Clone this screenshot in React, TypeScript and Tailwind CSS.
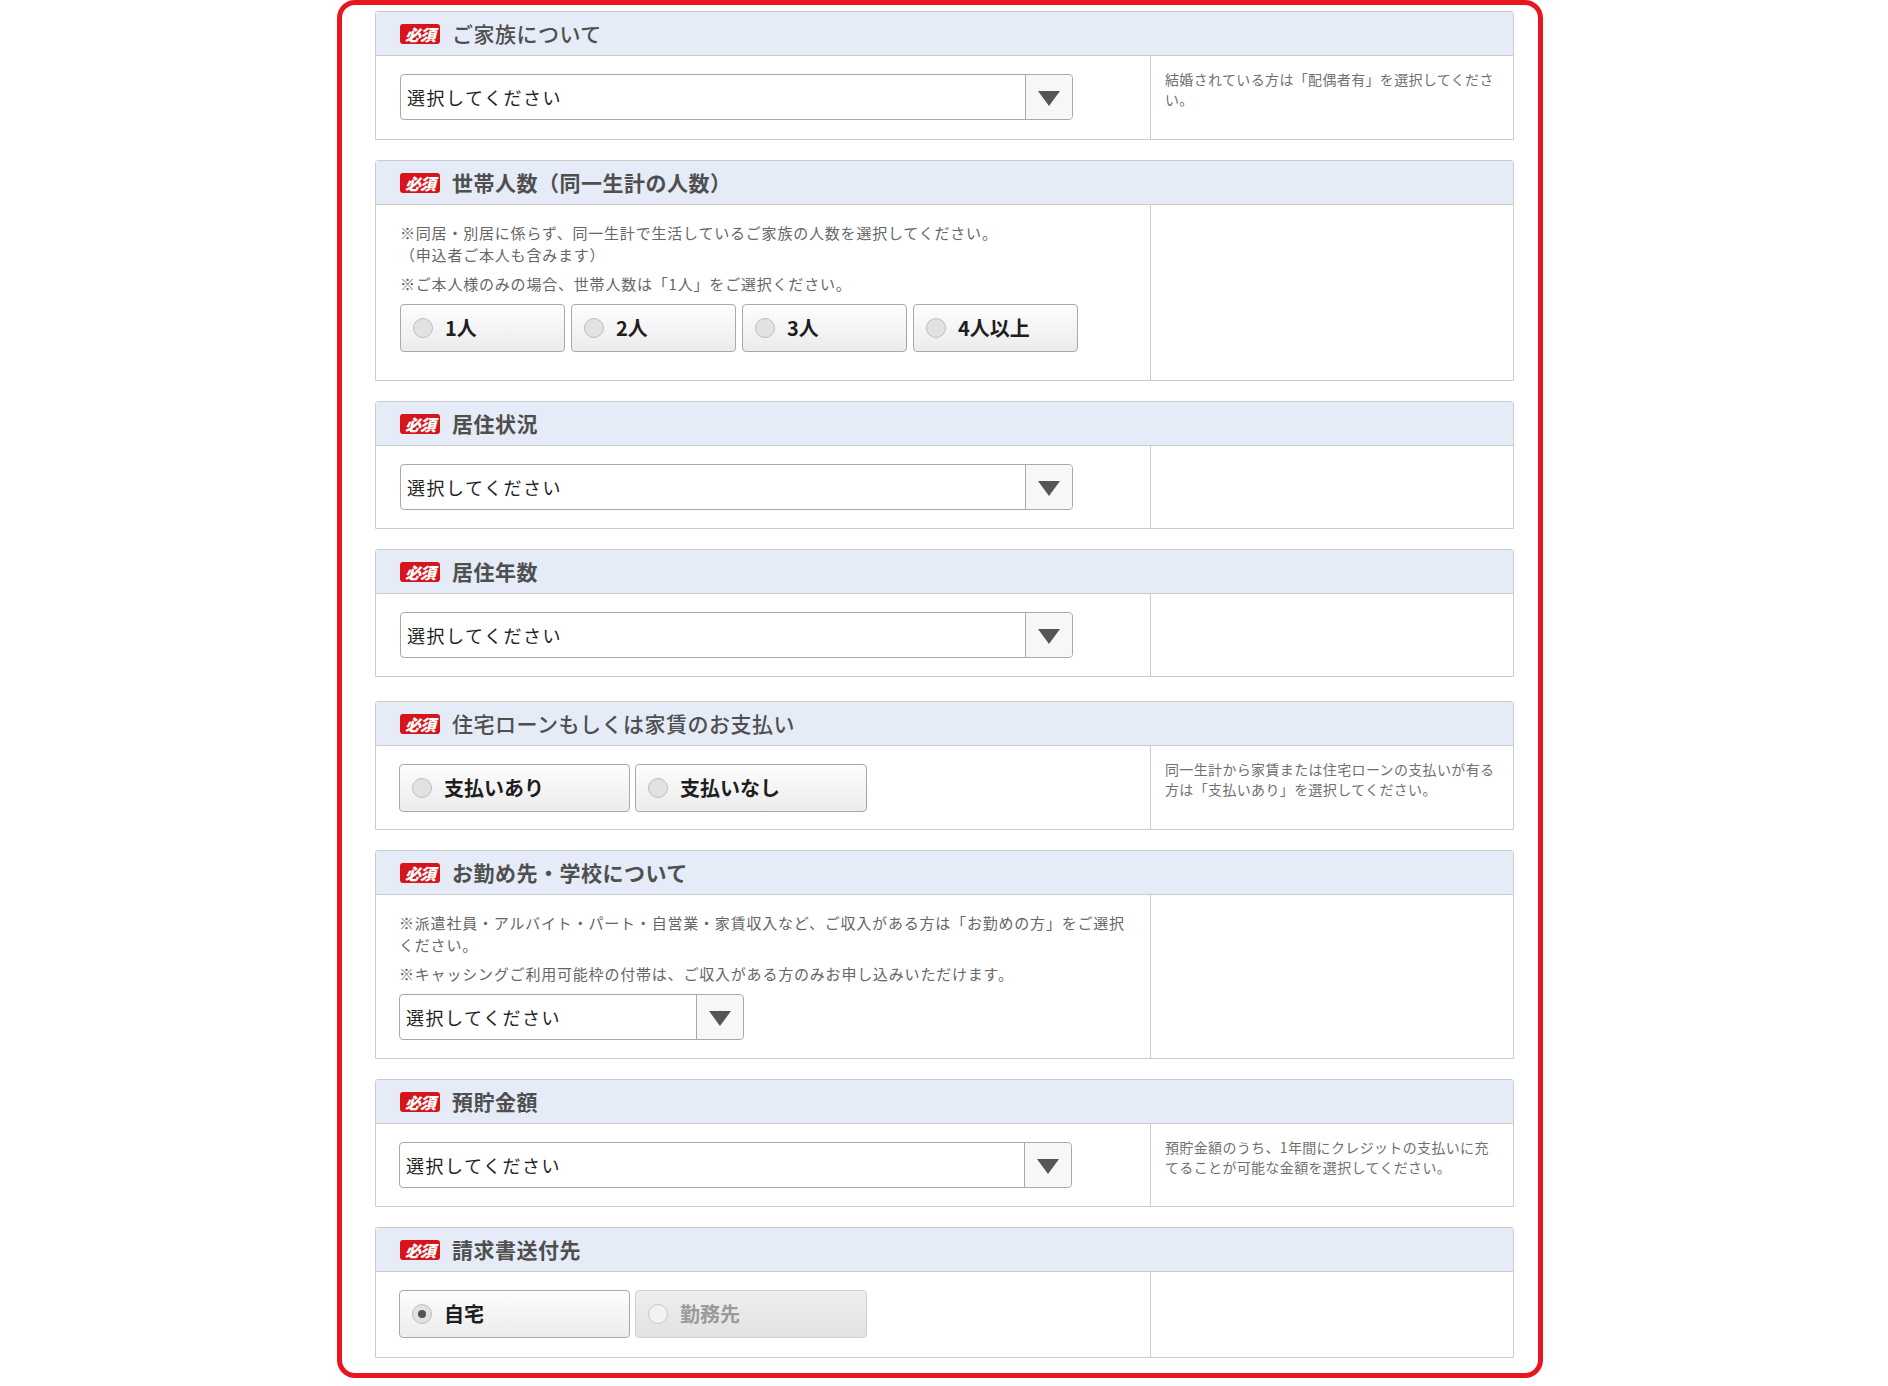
import React from 'react';

interface SectionProps {
  title: string;
  weight?: string;
  note?: React.ReactNode;
  bodyClass: string;
  className?: string;
  children: React.ReactNode;
}

const Badge = () => (
  <span className="inline-flex h-[20px] w-[40px] items-center justify-center rounded-[3px] bg-[#d8141b] text-[16px] font-black italic leading-none tracking-[-1px] text-white">
    必須
  </span>
);

const Section: React.FC<SectionProps> = ({ title, weight = 'font-bold', note, bodyClass, className = '', children }) => (
  <section className={`rounded-t-[3px] border border-[#cccccc] bg-white ${className}`}>
    <div className="flex h-[44px] items-center gap-[12px] border-b border-[#cccccc] bg-[#e5ecf7] pl-[24px]">
      <Badge />
      <h2 className={`text-[21px] leading-none tracking-[0.5px] text-[#4f4f4f] ${weight}`}>{title}</h2>
    </div>
    <div className="grid grid-cols-[774px_1fr]">
      <div className={bodyClass}>{children}</div>
      <div className="border-l border-[#cccccc] pl-[14px] pr-[12px] pt-[13px] text-[14px] leading-[20px] tracking-[0.35px] text-[#707070]">
        {note}
      </div>
    </div>
  </section>
);

const Select: React.FC<{ width: string }> = ({ width }) => (
  <div className={`flex h-[46px] rounded-[4px] border border-[#a9a9a9] bg-white ${width}`}>
    <div className="flex flex-1 items-center pl-[6px] text-[18px] tracking-[1.5px] text-[#222222]">選択してください</div>
    <div className="flex w-[47px] items-center justify-center rounded-r-[4px] border-l border-[#a9a9a9] bg-[#f7f7f7]">
      <svg width="22" height="15" viewBox="0 0 22 15" className="mt-[2px]">
        <polygon points="0,0 22,0 11,15" fill="#555555" />
      </svg>
    </div>
  </div>
);

const Radio: React.FC<{ label: string; width: string; checked?: boolean; disabled?: boolean }> = ({
  label,
  width,
  checked,
  disabled,
}) => (
  <div
    className={`flex h-[48px] items-center gap-[12px] rounded-[4px] border pl-[12px] ${width} ${
      disabled
        ? 'border-[#d0d0d0] bg-linear-to-b from-[#eeeeee] to-[#e2e2e2] text-[#9a9a9a]'
        : 'border-[#a9a9a9] bg-linear-to-b from-[#fdfdfd] to-[#ececec] text-[#1e1e1e]'
    }`}
  >
    <span
      className={`flex h-[20px] w-[20px] items-center justify-center rounded-full border ${
        disabled ? 'border-[#c8c8c8] bg-[#f2f2f2]' : 'border-[#bdbdbd] bg-[#e2e2e2]'
      }`}
    >
      {checked && <span className="h-[8px] w-[8px] rounded-full bg-[#555555]" />}
    </span>
    <span className="text-[20px] font-bold leading-none">{label}</span>
  </div>
);

const noteText = 'text-[15px] leading-[22px] tracking-[0.8px] text-[#666666]';

export default function App() {
  return (
    <div className="min-h-[1386px] bg-white font-['Noto_Sans_CJK_JP','Noto_Sans',sans-serif]">
      <div className="ml-[337px] w-[1206px] rounded-[18px] border-[5px] border-[#e8161f] pb-[15px] pl-[33px] pr-[24px] pt-[6px]">
        <div className="flex flex-col gap-[20px]">
          <Section
            title="ご家族について"
            weight="font-medium"
            bodyClass="pl-[24px] pt-[18px] pb-[19px]"
            note="結婚されている方は「配偶者有」を選択してください。"
          >
            <Select width="w-[673px]" />
          </Section>

          <Section title="世帯人数（同一生計の人数）" bodyClass="pl-[24px] pr-[20px] pt-[17px] pb-[28px]">
            <p className={noteText}>
              ※同居・別居に係らず、同一生計で生活しているご家族の人数を選択してください。
              <br />
              （申込者ご本人も含みます）
            </p>
            <p className={`mt-[7px] ${noteText}`}>※ご本人様のみの場合、世帯人数は「1人」をご選択ください。</p>
            <div className="mt-[9px] flex gap-[6px]">
              <Radio label="1人" width="w-[165px]" />
              <Radio label="2人" width="w-[165px]" />
              <Radio label="3人" width="w-[165px]" />
              <Radio label="4人以上" width="w-[165px]" />
            </div>
          </Section>

          <Section title="居住状況" bodyClass="pl-[24px] pt-[18px] pb-[18px]">
            <Select width="w-[673px]" />
          </Section>

          <Section title="居住年数" bodyClass="pl-[24px] pt-[18px] pb-[18px]">
            <Select width="w-[673px]" />
          </Section>

          <Section
            title="住宅ローンもしくは家賃のお支払い"
            weight="font-medium"
            className="mt-[4px]"
            bodyClass="pl-[23px] pt-[18px] pb-[17px]"
            note="同一生計から家賃または住宅ローンの支払いが有る方は「支払いあり」を選択してください。"
          >
            <div className="flex gap-[5px]">
              <Radio label="支払いあり" width="w-[231px]" />
              <Radio label="支払いなし" width="w-[232px]" />
            </div>
          </Section>

          <Section title="お勤め先・学校について" bodyClass="pl-[23px] pr-[20px] pt-[17px] pb-[18px]">
            <p className={noteText}>
              ※派遣社員・アルバイト・パート・自営業・家賃収入など、ご収入がある方は「お勤めの方」をご選択ください。
            </p>
            <p className={`mt-[7px] ${noteText}`}>※キャッシングご利用可能枠の付帯は、ご収入がある方のみお申し込みいただけます。</p>
            <div className="mt-[9px]">
              <Select width="w-[345px]" />
            </div>
          </Section>

          <Section
            title="預貯金額"
            bodyClass="pl-[23px] pt-[18px] pb-[18px]"
            note="預貯金額のうち、1年間にクレジットの支払いに充てることが可能な金額を選択してください。"
          >
            <Select width="w-[673px]" />
          </Section>

          <Section title="請求書送付先" bodyClass="pl-[23px] pt-[18px] pb-[19px]">
            <div className="flex gap-[5px]">
              <Radio label="自宅" width="w-[231px]" checked />
              <Radio label="勤務先" width="w-[232px]" disabled />
            </div>
          </Section>
        </div>
      </div>
    </div>
  );
}
